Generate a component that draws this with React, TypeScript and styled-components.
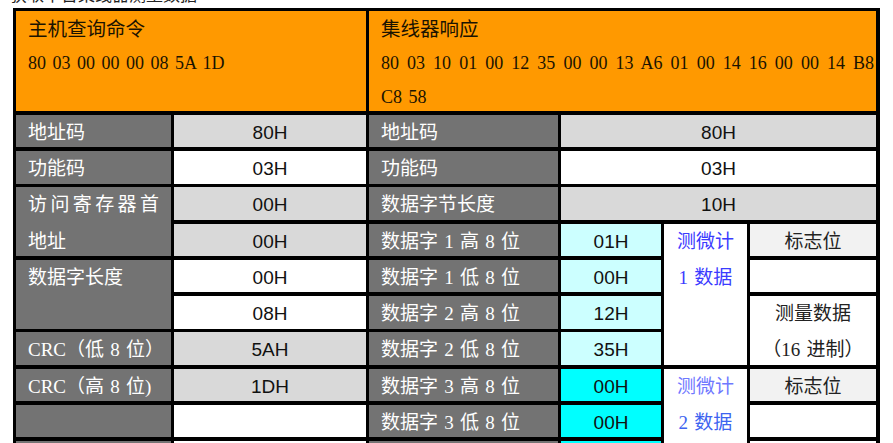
import React from 'react';
import styled, { createGlobalStyle } from 'styled-components';

type Tone = 'orange' | 'label' | 'grey' | 'white' | 'ice' | 'cyan' | 'mist';

const tones: Record<Tone, string> = {
  orange: '#ff9900',
  label: '#737373',
  grey: '#d9d9d9',
  white: '#ffffff',
  ice: '#ccffff',
  cyan: '#00ffff',
  mist: '#f2f2f2',
};

const GlobalStyle = createGlobalStyle`
  html, body {
    margin: 0;
    padding: 0;
    background: #fff;
    overflow: hidden;
  }
`;

const Page = styled.div`
  width: 893px;
  height: 443px;
  padding-left: 13px;
  box-sizing: border-box;
  overflow: hidden;
`;

// only the bottom edge of this line is visible in the shot
const Caption = styled.p`
  margin: -16px 0 4px -3px;
  font: 17px/20px 'Noto Sans CJK SC', sans-serif;
  color: #222;
  white-space: nowrap;
`;

const Table = styled.div`
  display: grid;
  grid-template-columns: 155px 192px 189px 100px 83px 126px;
  grid-template-rows: 100px repeat(10, 32.5px);
  column-gap: 3px;
  row-gap: 3.75px;
  width: max-content;
  background: #000;
  border: 3px solid #000;
  border-right-width: 4px;
`;

interface CellProps {
  $col: number;
  $row: number;
  $span?: number;
  $rows?: number;
  $tone: Tone;
}

const Cell = styled.div<CellProps>`
  grid-column: ${p => p.$col} / span ${p => p.$span ?? 1};
  grid-row: ${p => p.$row} / span ${p => p.$rows ?? 1};
  background: ${p => tones[p.$tone]};
  overflow: hidden;
  line-height: 36.25px;
  box-sizing: border-box;
`;

const Header = styled(Cell)<{ $right?: boolean }>`
  padding: 0 ${p => (p.$right ? '2px' : '12px')} 0 12px;
  line-height: 34.5px;
  color: #1a1300;
`;

const HeadTitle = styled.div`
  font: 19.5px 'Noto Sans CJK SC', sans-serif;
  line-height: 34.5px;
`;

const HeadCode = styled.div<{ $fill?: boolean }>`
  font: 18px 'Liberation Serif', serif;
  line-height: 34.5px;
  word-spacing: 2px;
  white-space: nowrap;
  text-align: ${p => (p.$fill ? 'justify' : 'left')};
  text-align-last: ${p => (p.$fill ? 'justify' : 'auto')};
`;

const Label = styled(Cell)`
  padding: 0 12px;
  color: #fff;
  font: 19px 'Liberation Serif', 'Noto Sans CJK SC', serif;
  line-height: 36.25px;
  text-align: justify;
  word-spacing: 1.5px;
`;

const Value = styled(Cell)`
  text-align: center;
  color: #111;
  font: 19px 'Liberation Sans', Arial, sans-serif;
  line-height: 36.25px;
`;

const Note = styled(Cell)<{ $ink?: string }>`
  text-align: center;
  color: ${p => p.$ink ?? '#222'};
  font: 19px 'Liberation Serif', 'Noto Sans CJK SC', serif;
  line-height: 36.25px;
  word-spacing: 1.5px;
`;

const Line = styled.div<{ $ink?: string }>`
  color: ${p => p.$ink ?? 'inherit'};
`;

const labels: [number, number, string, number?][] = [
  [1, 2, '地址码'],
  [1, 3, '功能码'],
  [1, 4, '访问寄存器首地址', 2],
  [1, 6, '数据字长度', 2],
  [1, 8, 'CRC（低 8 位）'],
  [1, 9, 'CRC（高 8 位)'],
  [1, 10, ''],
  [1, 11, ''],
  [3, 2, '地址码'],
  [3, 3, '功能码'],
  [3, 4, '数据字节长度'],
  [3, 5, '数据字 1 高 8 位'],
  [3, 6, '数据字 1 低 8 位'],
  [3, 7, '数据字 2 高 8 位'],
  [3, 8, '数据字 2 低 8 位'],
  [3, 9, '数据字 3 高 8 位'],
  [3, 10, '数据字 3 低 8 位'],
  [3, 11, ''],
];

const values: [number, number, string, Tone, number?][] = [
  [2, 2, '80H', 'grey'],
  [2, 3, '03H', 'white'],
  [2, 4, '00H', 'grey'],
  [2, 5, '00H', 'grey'],
  [2, 6, '00H', 'white'],
  [2, 7, '08H', 'white'],
  [2, 8, '5AH', 'grey'],
  [2, 9, '1DH', 'grey'],
  [2, 10, '', 'white'],
  [2, 11, '', 'white'],
  [4, 2, '80H', 'grey', 3],
  [4, 3, '03H', 'white', 3],
  [4, 4, '10H', 'grey', 3],
  [4, 5, '01H', 'ice'],
  [4, 6, '00H', 'ice'],
  [4, 7, '12H', 'ice'],
  [4, 8, '35H', 'ice'],
  [4, 9, '00H', 'cyan'],
  [4, 10, '00H', 'cyan'],
  [4, 11, '', 'cyan'],
];

export default function App() {
  return (
    <Page>
      <GlobalStyle />
      <Caption>获取单台集线器测量数据</Caption>
      <Table>
        <Header $col={1} $row={1} $span={2} $tone="orange">
          <HeadTitle>主机查询命令</HeadTitle>
          <HeadCode>80 03 00 00 00 08 5A 1D</HeadCode>
        </Header>
        <Header $col={3} $row={1} $span={4} $tone="orange" $right>
          <HeadTitle>集线器响应</HeadTitle>
          <HeadCode $fill>80 03 10 01 00 12 35 00 00 13 A6 01 00 14 16 00 00 14 B8</HeadCode>
          <HeadCode>C8 58</HeadCode>
        </Header>

        {labels.map(([c, r, text, rows]) => (
          <Label key={`l${c}-${r}`} $col={c} $row={r} $rows={rows} $tone="label">
            {text}
          </Label>
        ))}

        {values.map(([c, r, text, tone, span]) => (
          <Value key={`v${c}-${r}`} $col={c} $row={r} $span={span} $tone={tone}>
            {text}
          </Value>
        ))}

        <Note $col={5} $row={5} $rows={4} $tone="white" $ink="#3b3bff">
          <Line>测微计</Line>
          <Line>1 数据</Line>
        </Note>
        <Note $col={5} $row={9} $rows={3} $tone="white">
          <Line $ink="#6f78ff">测微计</Line>
          <Line $ink="#3d63f0">2 数据</Line>
        </Note>

        <Note $col={6} $row={5} $tone="mist">标志位</Note>
        <Note $col={6} $row={6} $tone="white" />
        <Note $col={6} $row={7} $rows={2} $tone="white">
          <Line>测量数据</Line>
          <Line>（16 进制）</Line>
        </Note>
        <Note $col={6} $row={9} $tone="mist">标志位</Note>
        <Note $col={6} $row={10} $tone="white" />
        <Note $col={6} $row={11} $tone="white" />
      </Table>
    </Page>
  );
}
